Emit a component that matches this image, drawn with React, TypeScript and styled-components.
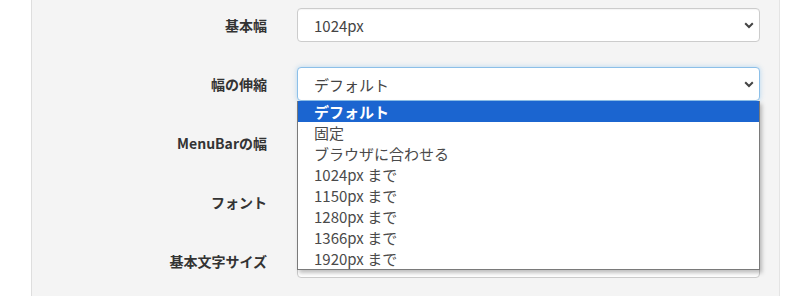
import React from 'react';
import styled, { createGlobalStyle } from 'styled-components';

const GlobalStyle = createGlobalStyle`
  html, body {
    margin: 0;
    padding: 0;
    background: #ffffff;
    height: 296px;
    overflow: hidden;
  }
  body {
    font-family: "Noto Sans CJK JP", "Noto Sans", sans-serif;
  }
`;

const Panel = styled.div`
  margin-left: 31px;
  width: 747px;
  height: 296px;
  box-sizing: content-box;
  background: #f4f4f4;
  border-left: 1px solid #dedede;
  border-right: 1px solid #e4e4e4;
  padding-top: 8px;
`;

const Row = styled.div`
  display: grid;
  grid-template-columns: 235px 463px;
  column-gap: 30px;
  align-items: center;
  margin-bottom: 25px;
`;

const Label = styled.label`
  text-align: right;
  font-size: 14px;
  font-weight: 700;
  color: #333;
  line-height: 20px;
`;

const Field = styled.div`
  position: relative;
`;

const SelectBox = styled.div<{ $focused?: boolean }>`
  box-sizing: border-box;
  height: 34px;
  display: flex;
  align-items: center;
  justify-content: space-between;
  padding: 0 5px 0 16px;
  background: #fff;
  border: 1px solid ${(p) => (p.$focused ? '#8cbfe8' : '#cccccc')};
  border-radius: 4px;
  box-shadow: ${(p) =>
    p.$focused ? '0 0 5px rgba(102, 175, 233, 0.45)' : 'inset 0 1px 1px rgba(0,0,0,0.04)'};
  font-size: 15px;
  color: #444;
`;

const Chevron = () => (
  <svg width="10" height="7" viewBox="0 0 10 7">
    <path d="M1.2 1.3 L5 5 L8.8 1.3" fill="none" stroke="#444" strokeWidth="2" />
  </svg>
);

const DropList = styled.ul`
  position: absolute;
  top: 34px;
  left: 0;
  width: 463px;
  box-sizing: border-box;
  margin: 0;
  padding: 0;
  list-style: none;
  background: #fff;
  border: 1px solid #7a7a7a;
  border-top: none;
  box-shadow: 2px 3px 4px rgba(0, 0, 0, 0.25);
  z-index: 10;
`;

const Option = styled.li<{ $selected?: boolean }>`
  height: 21px;
  line-height: 21px;
  padding-left: 16px;
  font-size: 15px;
  color: ${(p) => (p.$selected ? '#fff' : '#4a4a4a')};
  background: ${(p) => (p.$selected ? '#1b65d0' : 'transparent')};
  font-weight: ${(p) => (p.$selected ? 700 : 400)};
  white-space: nowrap;
`;

const options = [
  'デフォルト',
  '固定',
  'ブラウザに合わせる',
  '1024px まで',
  '1150px まで',
  '1280px まで',
  '1366px まで',
  '1920px まで',
];

// values of the selects hidden behind the open list are not visible
const fields = [
  { label: '基本幅', value: '1024px' },
  { label: '幅の伸縮', value: 'デフォルト', open: true },
  { label: 'MenuBarの幅', value: '' },
  { label: 'フォント', value: '' },
  { label: '基本文字サイズ', value: '' },
];

const App = () => (
  <>
    <GlobalStyle />
    <Panel>
      {fields.map((f) => (
        <Row key={f.label}>
          <Label>{f.label}</Label>
          <Field>
            <SelectBox $focused={f.open}>
              <span>{f.value}</span>
              <Chevron />
            </SelectBox>
            {f.open && (
              <DropList>
                {options.map((o, i) => (
                  <Option key={o} $selected={i === 0}>
                    {o}
                  </Option>
                ))}
              </DropList>
            )}
          </Field>
        </Row>
      ))}
    </Panel>
  </>
);

export default App;
